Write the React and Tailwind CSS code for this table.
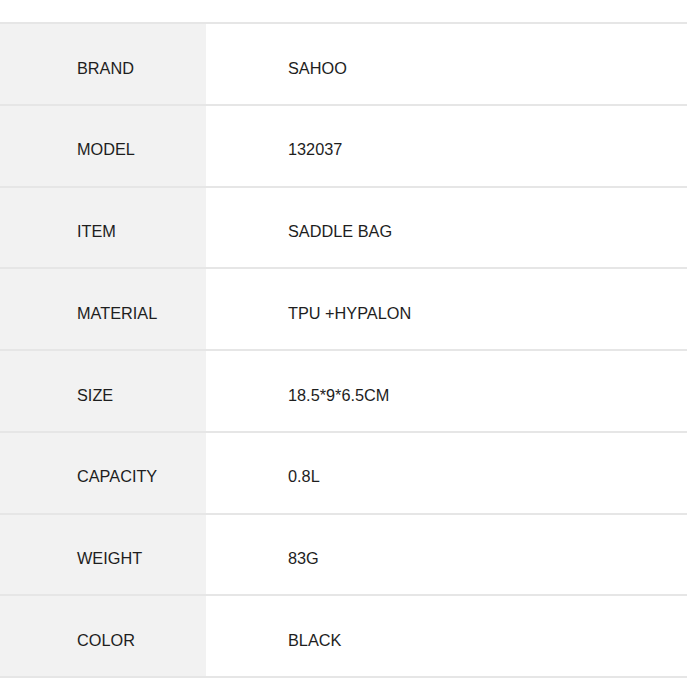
export default function App() {
  const rows = [
    ["BRAND", "SAHOO"],
    ["MODEL", "132037"],
    ["ITEM", "SADDLE BAG"],
    ["MATERIAL", "TPU +HYPALON"],
    ["SIZE", "18.5*9*6.5CM"],
    ["CAPACITY", "0.8L"],
    ["WEIGHT", "83G"],
    ["COLOR", "BLACK"],
  ];
  return (
    <div className="w-[700px] h-[700px] bg-white pt-[22px]" style={{ fontFamily: '"Liberation Sans", Arial, sans-serif' }}>
      <div className="w-[687px] border-t-2 border-[#e6e6e6]">
        {rows.map(([k, v]) => (
          <div key={k} className="flex h-[81.75px] border-b-2 border-[#e6e6e6]">
            <div className="w-[206px] bg-[#f2f2f2] pl-[77px] pt-[8px] flex items-center text-[16.3px] text-[#1e1e1e]">{k}</div>
            <div className="flex-1 pl-[82px] pt-[8px] flex items-center text-[16.3px] text-[#1e1e1e]">{v}</div>
          </div>
        ))}
      </div>
    </div>
  );
}
